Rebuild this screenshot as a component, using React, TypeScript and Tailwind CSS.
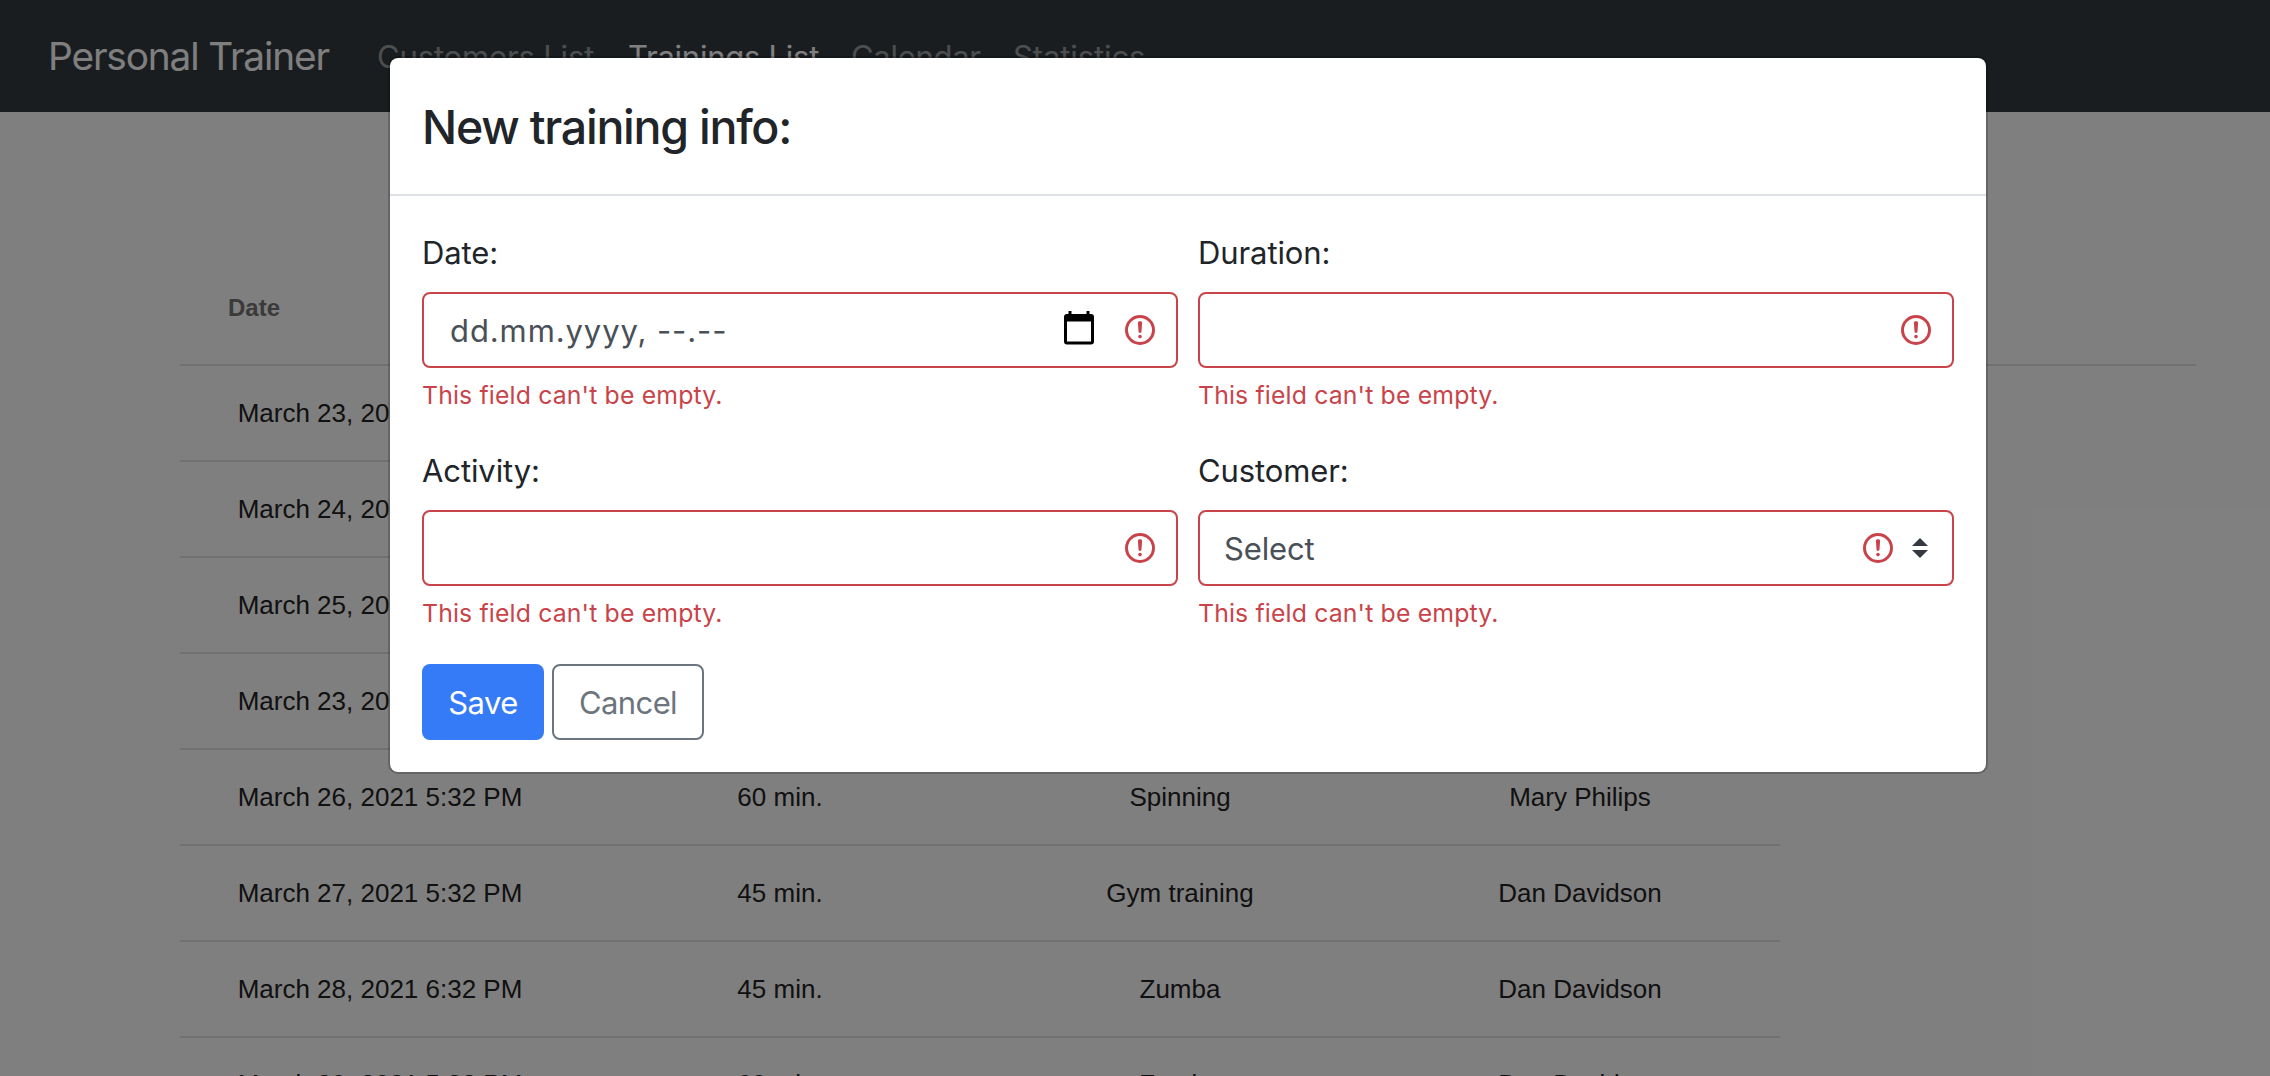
import React from "react";

const links = [
  { label: "Customers List", box: "w-[251px] tracking-[-0.15px]", color: "text-white/50" },
  { label: "Trainings List", box: "w-[223px] tracking-[-0.25px]", color: "text-white" },
  { label: "Calendar", box: "w-[162px] tracking-[-0.3px]", color: "text-white/50" },
  { label: "Statistics", box: "w-[162px] tracking-[-0.1px]", color: "text-white/50" },
];

const rows = [
  ["March 23, 2021 5:32 PM", "60 min.", "Spinning", "Mary Philips"],
  ["March 24, 2021 5:32 PM", "60 min.", "Zumba", "Dan Davidson"],
  ["March 25, 2021 5:32 PM", "45 min.", "Gym training", "Mary Philips"],
  ["March 23, 2021 5:32 PM", "60 min.", "Spinning", "Dan Davidson"],
  ["March 26, 2021 5:32 PM", "60 min.", "Spinning", "Mary Philips"],
  ["March 27, 2021 5:32 PM", "45 min.", "Gym training", "Dan Davidson"],
  ["March 28, 2021 6:32 PM", "45 min.", "Zumba", "Dan Davidson"],
  ["March 29, 2021 5:32 PM", "60 min.", "Zumba", "Dan Davidson"],
];

function ErrorIcon() {
  return (
    <svg className="size-9 shrink-0" viewBox="0 0 12 12" fill="none" stroke="#c9444a">
      <circle cx="6" cy="6" r="4.5" />
      <path strokeLinejoin="round" d="M5.8 3.6h.4L6 6.5z" />
      <circle cx="6" cy="8.2" r=".6" fill="#c9444a" stroke="none" />
    </svg>
  );
}

function CalendarIcon() {
  return (
    <svg className="mb-1 h-[34px] w-[30px] shrink-0" viewBox="0 0 30 34">
      <path
        fill="#000"
        fillRule="evenodd"
        d="M4.5 0h3v3h15V0h3v3H27a3 3 0 0 1 3 3v24.500a3 3 0 0 1-3 3H3a3 3 0 0 1-3-3V6a3 3 0 0 1 3-3h1.500zM3 10.500v20h24v-20z"
      />
    </svg>
  );
}

function SelectArrows() {
  return (
    <svg className="h-5 w-4 shrink-0" viewBox="0 0 4 5" fill="#343a40">
      <path d="M2 0L0 2h4zm0 5L0 3h4z" />
    </svg>
  );
}

function Field({ label, children }: { label: string; children?: React.ReactNode }) {
  return (
    <div className="mb-8">
      <div className="mb-[15px] pt-px text-[31px] leading-[48px] tracking-[-0.1px] text-[#212529]">{label}</div>
      <div className="flex h-[76px] items-center rounded-lg border-2 border-[#c9444a] pr-[18px] pl-6 text-[31px] text-[#495057]">
        {children}
      </div>
      <div className="mt-2 text-[24.8px] leading-[38px] tracking-[0.15px] text-[#c9444a]">This field can't be empty.</div>
    </div>
  );
}

export default function App() {
  return (
    <div className="relative h-[1076px] w-[2270px] overflow-hidden bg-white font-['Inter',sans-serif]">
      <nav className="flex h-28 items-center bg-[#343a40] pl-12 whitespace-nowrap">
        <div className="w-[329px] text-[38.8px] tracking-[-1.15px] text-white">Personal Trainer</div>
        {links.map((l) => (
          <div key={l.label} className={"shrink-0 pt-0.5 text-[31px] " + l.box + " " + l.color}>
            {l.label}
          </div>
        ))}
      </nav>

      <main className="ml-[180px] w-[2016px] pt-[140px] font-['Liberation_Sans',Arial,sans-serif]">
        <div className="flex h-[114px] items-center border-b-2 border-[#e2e2e2] pl-12 text-[24px] font-bold text-[#757575]">Date</div>
        {rows.map((r, i) => (
          <div key={i} className="grid h-24 w-[1600px] grid-cols-4 items-center border-b-2 border-[#e2e2e2] text-center text-[26px] text-[#222] last:pb-0.5">
            {r.map((c, j) => (
              <div key={j}>{c}</div>
            ))}
          </div>
        ))}
      </main>

      <div className="absolute inset-0 flex items-start bg-black/50 pt-14 pl-[388px]">
        <div className="w-[1600px] rounded-[10px] border-2 border-black/20 bg-white bg-clip-padding">
          <div className="border-b-2 border-[#dee2e6] px-8 pt-[33px] pb-[31px] text-[46.5px] leading-[72px] font-medium tracking-[-1.25px] text-[#212529]">
            New training info:
          </div>
          <div className="p-8">
            <div className="grid grid-cols-2 gap-x-5">
              <Field label="Date:">
                <span className="flex-1 pt-0.5 pl-0.5 tracking-[0.9px]">dd.mm.yyyy, --.--</span>
                <CalendarIcon />
                <span className="w-7" />
                <ErrorIcon />
              </Field>
              <Field label="Duration:">
                <span className="flex-1" />
                <ErrorIcon />
              </Field>
              <Field label="Activity:">
                <span className="flex-1" />
                <ErrorIcon />
              </Field>
              <Field label="Customer:">
                <span className="flex-1 pt-0.5 tracking-[-0.15px]">Select</span>
                <ErrorIcon />
                <span className="w-4" />
                <SelectArrows />
                <span className="w-[6px]" />
              </Field>
            </div>
            <div className="flex gap-2 text-[31px] tracking-[-0.6px]">
              <button className="h-[76px] w-[122px] rounded-lg bg-[#357af6] pt-0.5 text-white">Save</button>
              <button className="h-[76px] w-[152px] rounded-lg border-2 border-[#6c757d] pt-0.5 text-[#6c757d]">Cancel</button>
            </div>
          </div>
        </div>
      </div>
    </div>
  );
}
